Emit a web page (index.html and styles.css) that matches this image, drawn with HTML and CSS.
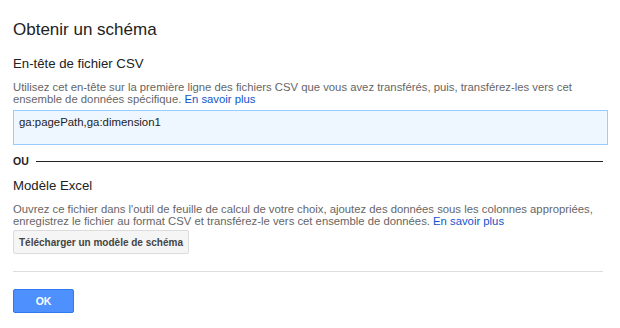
FILE: index.html
```html
<!DOCTYPE html>
<html lang="fr">

<head>
    <meta charset="UTF-8">
    <meta name="viewport" content="width=device-width, initial-scale=1.0">
    <title>Obtenir un schéma</title>
    <link rel="stylesheet" href="styles.css">
</head>

<body>
    <div class="dialog">
        <h1 class="title">Obtenir un schéma</h1>

        <h2 class="subtitle">En-tête de fichier CSV</h2>
        <p class="help">Utilisez cet en-tête sur la première ligne des fichiers CSV que vous avez transférés, puis, transférez-les vers cet ensemble de données spécifique. <a href="#">En savoir plus</a></p>
        <div class="header-box">ga:pagePath,ga:dimension1</div>

        <div class="or-row">
            <span class="or-label">OU</span>
            <span class="or-line"></span>
        </div>

        <h2 class="subtitle">Modèle Excel</h2>
        <p class="help">Ouvrez ce fichier dans l'outil de feuille de calcul de votre choix, ajoutez des données sous les colonnes appropriées, enregistrez le fichier au format CSV et transférez-le vers cet ensemble de données. <a href="#">En savoir plus</a></p>
        <div class="actions">
            <button class="btn-grey">Télécharger un modèle de schéma</button>
        </div>

        <div class="footer">
            <button class="btn-blue">OK</button>
        </div>
    </div>
</body>

</html>
```

FILE: styles.css
```css
body {
    font-family: "Liberation Sans", Arial, sans-serif;
    margin: 0;
    padding: 0;
    background-color: #fff;
    color: #222;
}

.dialog {
    padding: 20px 12px 0 13px;
    width: 595px;
}

.title {
    font-size: 17px;
    font-weight: normal;
    margin: 0 0 16px;
    line-height: 20px;
}

.subtitle {
    font-size: 13.2px;
    font-weight: normal;
    margin: 0 0 9px;
    line-height: 16px;
}

.help {
    font-size: 11.3px;
    color: #666;
    line-height: 12px;
    margin: 0;
}

.help a {
    color: #15c;
    text-decoration: none;
}

.header-box {
    background-color: #eef6ff;
    border: 1px solid #9cf;
    height: 35px;
    margin-top: 5px;
    padding: 5px 5px 0;
    box-sizing: border-box;
    font-size: 11.4px;
    color: #222;
}

.or-row {
    display: flex;
    align-items: center;
    margin: 10px 0 11px;
    width: 590px;
}

.or-label {
    font-size: 10.5px;
    font-weight: bold;
    margin-right: 7px;
}

.or-line {
    flex: 1;
    border-top: 1px solid #222;
}

.actions {
    display: flex;
    margin-top: 3px;
}

.btn-grey {
    font-family: "Liberation Sans", Arial, sans-serif;
    font-size: 10px;
    font-weight: bold;
    color: #444;
    background-color: #f5f5f5;
    border: 1px solid #dcdcdc;
    border-radius: 2px;
    height: 24px;
    padding: 0 5px;
}

.footer {
    border-top: 1px solid #ddd;
    margin-top: 17px;
    padding-top: 17px;
    width: 590px;
}

.btn-blue {
    font-family: "Liberation Sans", Arial, sans-serif;
    font-size: 10.5px;
    font-weight: bold;
    color: #fff;
    background-color: #4d90fe;
    border: 1px solid #3079ed;
    border-radius: 2px;
    height: 24px;
    width: 61px;
}
```
